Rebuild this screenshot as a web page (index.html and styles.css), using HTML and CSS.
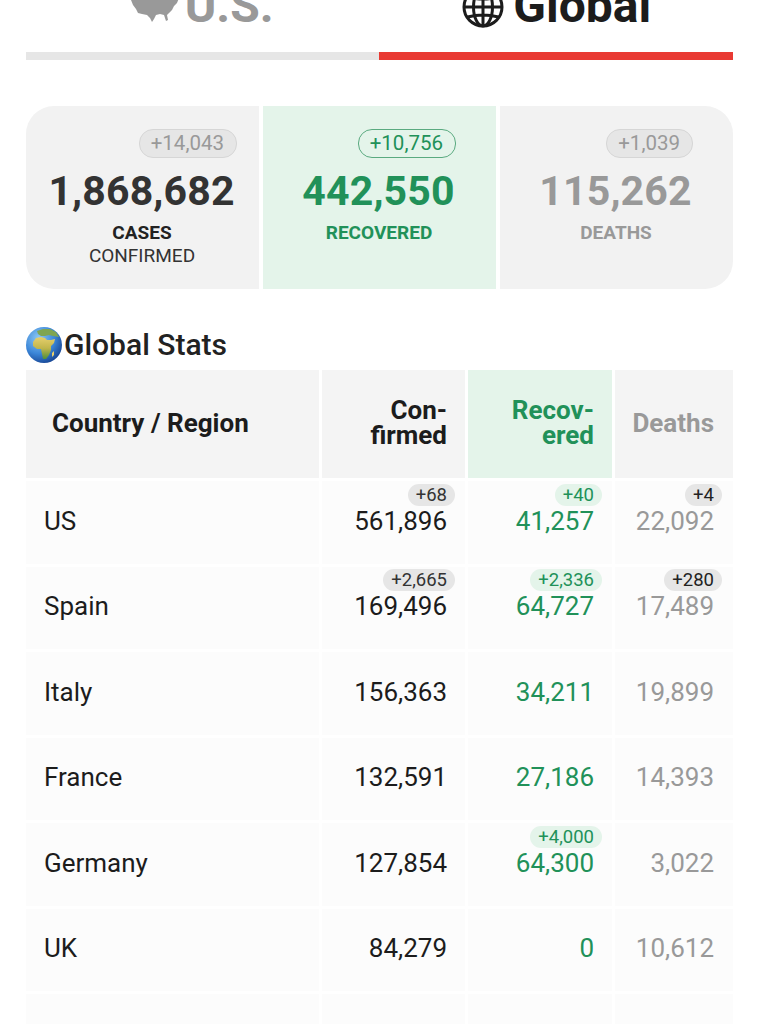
FILE: index.html
```html
<!DOCTYPE html>
<html lang="en">
<head>
    <meta charset="UTF-8">
    <meta name="viewport" content="width=device-width, initial-scale=1.0">
    <title>Coronavirus Stats</title>
    <link rel="stylesheet" href="styles.css">
</head>
<body>
    <div class="page">
        <div class="tabs">
            <div class="tab tab-left">
                <svg class="tab-icon" viewBox="0 -16 48 40" aria-hidden="true">
                    <path fill="#999" d="M0 -16 L48 -16 L48 -2 L46 3 L43 6 L41 10 L38 13 L36 15 L37 20 L35 21 L33 15 L29 14 L25 15 L23 19 L21 22 L19 18 L16 15 L11 14 L7 13 L5 9 L2 5 L0 0 Z"/>
                </svg>
                <span class="tab-label tab-us">U.S.</span>
            </div>
            <div class="tab">
                <svg class="tab-icon-globe" viewBox="0 0 42 42" aria-hidden="true">
                    <g fill="none" stroke="#1c1c1c" stroke-width="3">
                        <circle cx="21" cy="21" r="19"/>
                        <ellipse cx="21" cy="21" rx="9.5" ry="19"/>
                        <path d="M21 2 V40 M2 21 H40 M5.5 11 Q21 15 36.5 11 M5.5 31 Q21 27 36.5 31"/>
                    </g>
                </svg>
                <span class="tab-label tab-global">Global</span>
            </div>
        </div>
        <div class="tab-bar">
            <div class="tab-bar-off"></div>
            <div class="tab-bar-on"></div>
        </div>

        <div class="cards">
            <div class="card card-confirmed">
                <div class="delta-row"><span class="delta">+14,043</span></div>
                <div class="card-num">1,868,682</div>
                <div class="card-label">CASES</div>
                <div class="card-sub">CONFIRMED</div>
            </div>
            <div class="card card-recovered">
                <div class="delta-row"><span class="delta">+10,756</span></div>
                <div class="card-num">442,550</div>
                <div class="card-label">RECOVERED</div>
            </div>
            <div class="card card-deaths">
                <div class="delta-row"><span class="delta">+1,039</span></div>
                <div class="card-num">115,262</div>
                <div class="card-label">DEATHS</div>
            </div>
        </div>

        <h2 class="section-title">
            <svg class="earth" viewBox="0 0 36 36" aria-hidden="true">
                <defs>
                    <radialGradient id="sea" cx="35%" cy="30%" r="80%">
                        <stop offset="0" stop-color="#8cc8f4"/>
                        <stop offset="0.55" stop-color="#3b86d8"/>
                        <stop offset="1" stop-color="#123c8a"/>
                    </radialGradient>
                    <linearGradient id="land" x1="0" y1="0" x2="0" y2="1">
                        <stop offset="0" stop-color="#e6cf6e"/>
                        <stop offset="0.5" stop-color="#c2b64c"/>
                        <stop offset="1" stop-color="#4f8f3c"/>
                    </linearGradient>
                </defs>
                <circle cx="18" cy="18" r="18" fill="url(#sea)"/>
                <path fill="#7fa552" d="M11 4 L17 2 L24 2 L30 5 L33 10 L27 9 L23 8 L19 9 L15 9 L12 7 Z"/>
                <path fill="url(#land)" d="M7 15 L10 11 L15 10 L19 11 L21 13 L25 13 L29 12 L28 16 L25 19 L25 23 L23 28 L20 32 L17 32 L16 27 L15 22 L11 22 L7 19 Z"/>
                <path fill="#e6cf6e" d="M26 26 L28 24 L28 28 L26 30 Z"/>
            </svg>
            <span>Global Stats</span>
        </h2>

        <div class="stats">
            <div class="cell head head-name">Country / Region</div>
            <div class="cell head head-num">Con-<br>firmed</div>
            <div class="cell head head-num head-rec">Recov-<br>ered</div>
            <div class="cell head head-num head-dead">Deaths</div>

            <div class="cell name">US</div>
            <div class="cell num"><span class="pill">+68</span>561,896</div>
            <div class="cell num rec"><span class="pill">+40</span>41,257</div>
            <div class="cell num dead"><span class="pill">+4</span>22,092</div>

            <div class="cell name">Spain</div>
            <div class="cell num"><span class="pill">+2,665</span>169,496</div>
            <div class="cell num rec"><span class="pill">+2,336</span>64,727</div>
            <div class="cell num dead"><span class="pill">+280</span>17,489</div>

            <div class="cell name">Italy</div>
            <div class="cell num">156,363</div>
            <div class="cell num rec">34,211</div>
            <div class="cell num dead">19,899</div>

            <div class="cell name">France</div>
            <div class="cell num">132,591</div>
            <div class="cell num rec">27,186</div>
            <div class="cell num dead">14,393</div>

            <div class="cell name">Germany</div>
            <div class="cell num">127,854</div>
            <div class="cell num rec"><span class="pill">+4,000</span>64,300</div>
            <div class="cell num dead">3,022</div>

            <div class="cell name">UK</div>
            <div class="cell num">84,279</div>
            <div class="cell num rec">0</div>
            <div class="cell num dead">10,612</div>

            <div class="cell name">Mainland China</div>
            <div class="cell num"></div>
            <div class="cell num rec"></div>
            <div class="cell num dead"></div>
        </div>
    </div>
</body>
</html>
```

FILE: styles.css
```css
html, body {
    margin: 0;
    height: 1024px;
    overflow: hidden;
    background: #fff;
}
body {
    font-family: Roboto, "Liberation Sans", sans-serif;
    color: #1c1c1c;
}
.page {
    padding: 0 26px;
}

/* tabs, scrolled partly off the top */
.tabs {
    display: flex;
    height: 68px;
    margin-top: -16px;
}
.tab {
    flex: 1;
    display: flex;
    justify-content: center;
    align-items: flex-start;
}
.tab-left {
    padding-right: 2px;
}
.tab-label {
    font-size: 48px;
    font-weight: 700;
    line-height: 44px;
}
.tab-us { color: #999; }
.tab-global { color: #1c1c1c; }
.tab-icon {
    width: 48px;
    height: 40px;
    margin-right: 6px;
}
.tab-icon-globe {
    width: 42px;
    height: 42px;
    margin: 2px 9px 0 0;
}
.tab-bar {
    display: flex;
    height: 8px;
}
.tab-bar-off {
    flex: none;
    width: 353px;
    background: #e6e6e6;
}
.tab-bar-on {
    flex: 1;
    background: #e93a33;
}

/* summary cards */
.cards {
    display: grid;
    grid-template-columns: repeat(3, 1fr);
    gap: 4px;
    height: 183px;
    margin-top: 46px;
}
.card {
    background: #f2f2f2;
    text-align: center;
    padding-top: 23px;
}
.card-confirmed { border-radius: 28px 0 0 28px; color: #333; }
.card-recovered { background: #e4f4ea; color: #219159; }
.card-deaths { border-radius: 0 28px 28px 0; color: #999; }
.delta-row {
    display: flex;
    justify-content: flex-end;
    padding-right: 22px;
    height: 30px;
}
.card-recovered .delta-row { padding-right: 40px; }
.card-deaths .delta-row { padding-right: 40px; }
.delta {
    font-size: 20.5px;
    line-height: 27px;
    height: 27px;
    padding: 0 12px 0 11px;
    border-radius: 14px;
    border: 1px solid #d6d6d6;
    background: #e6e6e6;
    color: #999;
}
.card-recovered .delta {
    background: transparent;
    border-color: #5aaa80;
    color: #219159;
}
.card-num {
    font-size: 41px;
    font-weight: 700;
    line-height: 46px;
    margin-top: 9px;
    padding-right: 2px;
    letter-spacing: 0.15px;
}
.card-label {
    font-size: 19px;
    font-weight: 700;
    line-height: 22px;
    margin-top: 8px;
    padding-right: 1px;
}
.card-confirmed .card-label { color: #222; }
.card-sub {
    font-size: 19px;
    line-height: 22px;
    color: #333;
    margin-top: 1px;
    padding-right: 1px;
}

/* table */
.section-title {
    display: flex;
    align-items: center;
    height: 36px;
    margin: 38px 0 7px;
    font-size: 30px;
    font-weight: 500;
    line-height: 36px;
    color: #222;
}
.earth {
    width: 36px;
    height: 36px;
    margin-right: 2px;
    flex: none;
}
.stats {
    display: grid;
    grid-template-columns: 293px 143px 144px 118px;
    grid-template-rows: 108px;
    grid-auto-rows: 82.5px;
    gap: 3px;
}
.cell {
    background: #fcfcfc;
    box-sizing: border-box;
    padding: 0 18px 3px 0;
    font-size: 26px;
    line-height: 30px;
    color: #1c1c1c;
}
.head {
    display: flex;
    align-items: center;
    justify-content: flex-end;
    text-align: right;
    background: #f4f4f4;
    padding-bottom: 2px;
    font-size: 26px;
    font-weight: 700;
    line-height: 25px;
}
.head-name {
    justify-content: flex-start;
    padding-left: 26px;
}
.head-rec { background: #e4f4ea; color: #219159; }
.head-dead { color: #999; padding-right: 19px; }
.name {
    display: flex;
    align-items: center;
    padding-left: 18px;
}
.num {
    display: flex;
    flex-direction: column;
    align-items: flex-end;
    justify-content: center;
}
.rec { color: #219159; }
.dead { color: #999; padding-right: 19px; }
.pill {
    font-size: 18.5px;
    line-height: 22px;
    height: 22px;
    padding: 0 8px;
    margin: -22px -8px 0 0;
    border-radius: 11px;
    background: #e6e6e6;
    color: #333;
}
.rec .pill {
    background: #e4f4ea;
    color: #219159;
}
.dead .pill {
    color: #222;
}
```
